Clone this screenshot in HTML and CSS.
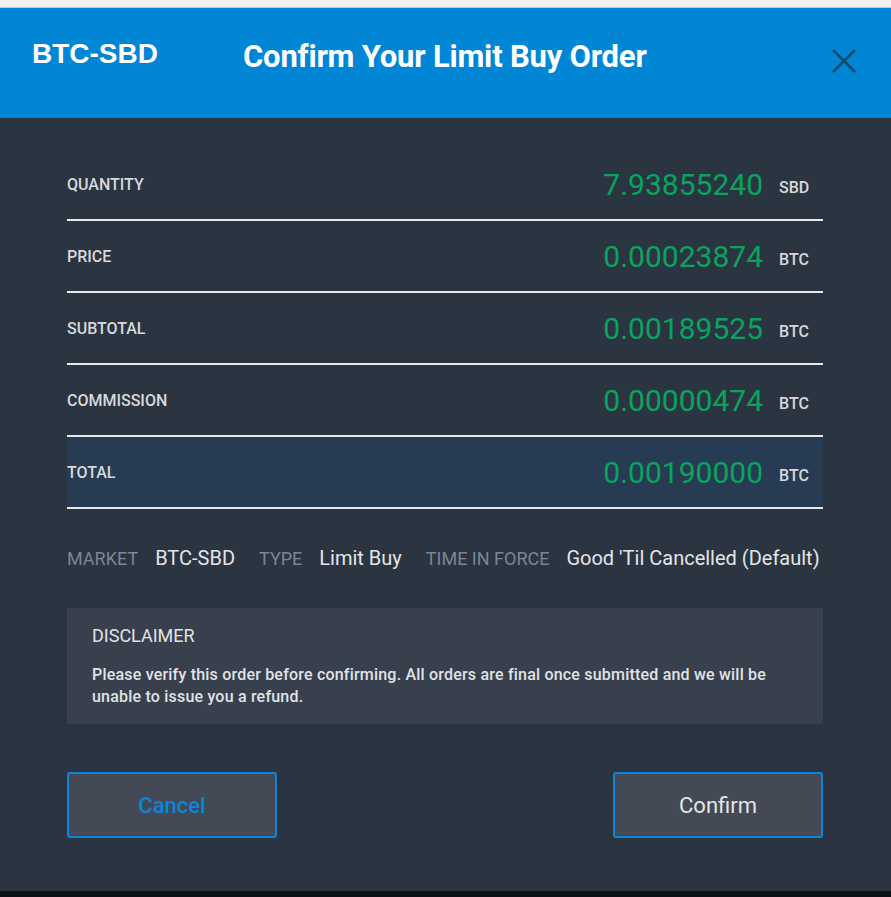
FILE: index.html
```html
<!DOCTYPE html>
<html lang="en">
<head>
  <meta charset="UTF-8" />
  <meta name="viewport" content="width=device-width, initial-scale=1.0" />
  <title>Confirm Order</title>
  <link rel="stylesheet" href="styles.css">
</head>
<body>

<div class="topo"></div>

<div class="modal">
  <div class="modal-header">
    <div class="mercado">BTC-SBD</div>
    <h1 class="titulo">Confirm Your Limit Buy Order</h1>
    <div class="fechar">
      <svg width="24" height="24" viewBox="0 0 24 24">
        <path d="M1 1 L23 23 M23 1 L1 23" stroke="#0d4b70" stroke-width="2.6" fill="none" />
      </svg>
    </div>
  </div>

  <div class="modal-body">
    <div class="linhas">
      <div class="linha">
        <span class="rotulo">QUANTITY</span>
        <span class="valor">7.93855240</span>
        <span class="moeda">SBD</span>
      </div>
      <div class="linha">
        <span class="rotulo">PRICE</span>
        <span class="valor">0.00023874</span>
        <span class="moeda">BTC</span>
      </div>
      <div class="linha">
        <span class="rotulo">SUBTOTAL</span>
        <span class="valor">0.00189525</span>
        <span class="moeda">BTC</span>
      </div>
      <div class="linha">
        <span class="rotulo">COMMISSION</span>
        <span class="valor">0.00000474</span>
        <span class="moeda">BTC</span>
      </div>
      <div class="linha total">
        <span class="rotulo">TOTAL</span>
        <span class="valor">0.00190000</span>
        <span class="moeda">BTC</span>
      </div>
    </div>

    <div class="info">
      <span class="info-rotulo">MARKET</span>
      <span class="info-valor">BTC-SBD</span>
      <span class="info-rotulo">TYPE</span>
      <span class="info-valor">Limit Buy</span>
      <span class="info-rotulo">TIME IN FORCE</span>
      <span class="info-valor">Good 'Til Cancelled (Default)</span>
    </div>

    <div class="aviso">
      <div class="aviso-titulo">DISCLAIMER</div>
      <p>Please verify this order before confirming. All orders are final once submitted and we will be unable to issue you a refund.</p>
    </div>

    <div class="botoes">
      <button class="cancelar">Cancel</button>
      <button class="confirmar">Confirm</button>
    </div>
  </div>
</div>

<div class="rodape"></div>

</body>
</html>
```

FILE: styles.css
```css
body {
  margin: 0;
  font-family: Roboto, 'Liberation Sans', sans-serif;
  background-color: #2b3441;
  overflow: hidden;
}
.topo {
  height: 7px;
  background: #f1f1f1;
  border-bottom: 1px solid #c9c9c9;
}
.modal {
  height: 883px;
  display: flex;
  flex-direction: column;
}
.modal-header {
  height: 110px;
  background: #0086d5;
  display: flex;
  align-items: flex-start;
  color: white;
}
.mercado {
  font-family: 'Liberation Sans', sans-serif;
  font-weight: bold;
  font-size: 28px;
  margin: 30px 0 0 32px;
  width: 211px;
}
.titulo {
  margin: 30px 0 0 0;
  font-size: 31px;
  font-weight: bold;
  letter-spacing: -0.2px;
  flex-grow: 1;
}
.fechar {
  margin: 41px 35px 0 0;
  height: 24px;
}
.modal-body {
  flex-grow: 1;
  padding: 31px 68px 0 67px;
}
.linha {
  display: flex;
  align-items: center;
  height: 70px;
  border-bottom: 2px solid #e8e8ea;
}
.linha.total {
  background: #273b52;
  border-top: 2px solid #e8e8ea;
  height: 70px;
  margin-top: -2px;
}
.rotulo {
  flex-grow: 1;
  color: #d6d9dd;
  font-size: 16px;
  font-weight: 500;
}
.valor {
  color: #08a45f;
  font-size: 30px;
  font-weight: 400;
}
.moeda {
  color: #d6d9dd;
  font-size: 16px;
  font-weight: 500;
  width: 44px;
  margin-left: 16px;
  padding-top: 7px;
}
.info {
  display: flex;
  align-items: baseline;
  margin-top: 37px;
  white-space: nowrap;
}
.info-rotulo {
  color: #7b8595;
  margin-right: 17px;
  font-size: 18px;
}
.info-valor {
  color: #e3e5e8;
  margin-right: 24px;
  font-size: 20px;
}
.info-valor:last-child {
  margin-right: 0;
}
.aviso {
  background: #37404c;
  margin-top: 38px;
  padding: 17px 25px 16px;
  color: #e1e3e6;
}
.aviso-titulo {
  font-size: 18px;
  margin-bottom: 18px;
}
.aviso p {
  margin: 0;
  max-width: 700px;
  font-size: 16px;
  letter-spacing: 0.2px;
  font-weight: 500;
  line-height: 22px;
}
.botoes {
  display: flex;
  justify-content: space-between;
  margin-top: 48px;
}
.botoes button {
  width: 210px;
  height: 66px;
  background: #434a56;
  border: 2px solid #0a86d8;
  border-radius: 3px;
  font-family: Roboto, sans-serif;
  font-size: 22px;
  font-weight: 400;
  cursor: pointer;
}
.botoes .cancelar {
  color: #0a86d8;
  font-weight: 500;
}
.botoes .confirmar {
  color: #e3e5e8;
}
.rodape {
  height: 6px;
  background: #0b1117;
}
```
